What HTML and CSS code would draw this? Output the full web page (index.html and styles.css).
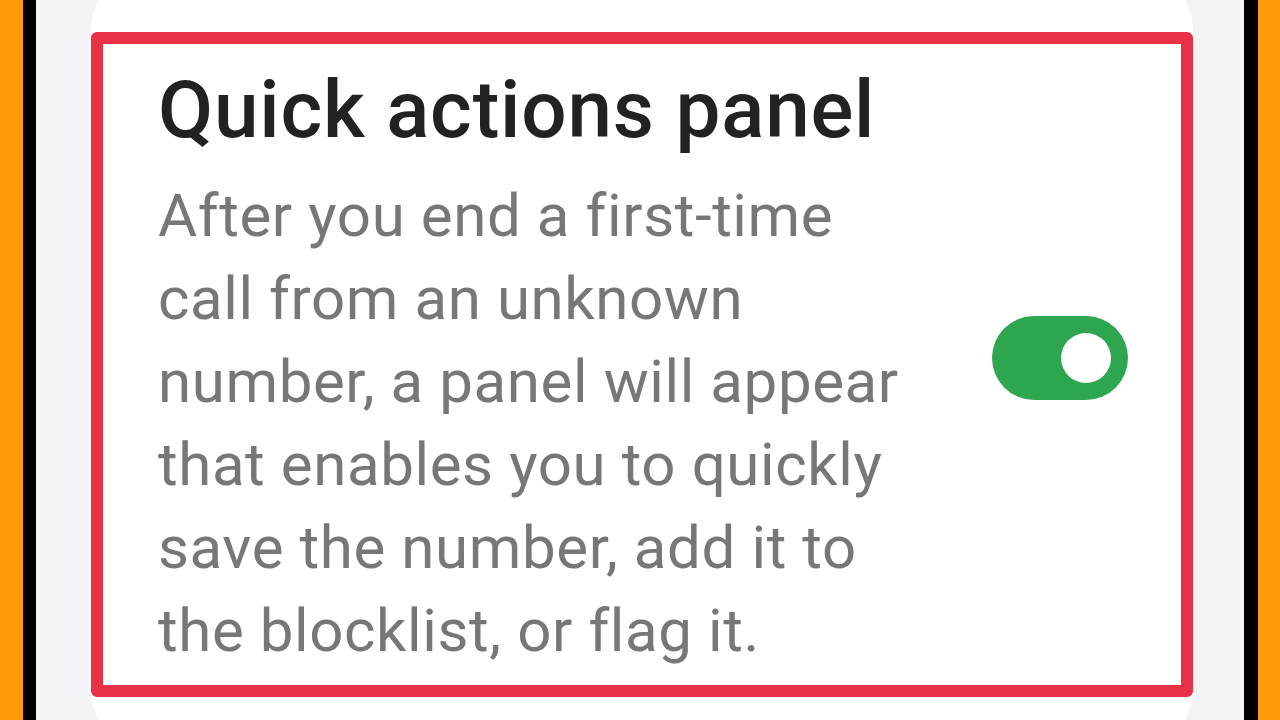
FILE: index.html
```html
<!DOCTYPE html>
<html lang="en">
<head>
  <meta charset="UTF-8">
  <meta name="viewport" content="width=device-width, initial-scale=1.0">
  <title>Quick actions panel</title>
  <link rel="stylesheet" href="styles.css">
</head>
<body>
  <div class="screen">
    <div class="card">
      <!-- highlighted setting -->
      <div class="highlight">
        <div class="setting">
          <div class="setting-text">
            <h2 class="setting-title">Quick actions panel</h2>
            <p class="setting-desc">After you end a first-time call from an unknown number, a panel will appear that enables you to quickly save the number, add it to the blocklist, or flag it.</p>
          </div>
          <div class="switch on" role="switch" aria-checked="true">
            <span class="switch-knob"></span>
          </div>
        </div>
      </div>
    </div>
  </div>
</body>
</html>
```

FILE: styles.css
```css
html, body {
  margin: 0;
  height: 720px;
  overflow: hidden;
}
body {
  background-color: #ff9a0a;
  font-family: Roboto, "Noto Sans", Arial, sans-serif;
}
.screen {
  margin: 0 22px 0 23px;
  height: 720px;
  background-color: #f4f4f6;
  border-left: 13px solid #000;
  border-right: 14px solid #000;
  overflow: hidden;
}
.card {
  margin: -30px 51px 0 55px;
  height: 780px;
  padding-top: 62px;
  box-sizing: border-box;
  background-color: #fff;
  border-radius: 60px;
}
.highlight {
  height: 665px;
  box-sizing: border-box;
  border: 12px solid #e93145;
  border-radius: 6px;
  padding: 18px 53px 0 55px;
}
.setting {
  display: flex;
  align-items: center;
  justify-content: space-between;
}
.setting-text {
  width: 770px;
}
.setting-title {
  margin: 0 0 16px;
  font-size: 80px;
  line-height: 96px;
  font-weight: 500;
  letter-spacing: 0.8px;
  color: #222;
}
.setting-desc {
  margin: 0;
  font-size: 60px;
  line-height: 83px;
  letter-spacing: 0.6px;
  color: #777;
}
.switch {
  position: relative;
  width: 136px;
  height: 84px;
  border-radius: 42px;
  background-color: #ccc;
  margin-bottom: 18px;
  flex-shrink: 0;
}
.switch.on {
  background-color: #2ea54f;
}
.switch-knob {
  position: absolute;
  top: 17px;
  right: 17px;
  width: 50px;
  height: 50px;
  border-radius: 50%;
  background-color: #fff;
}
```
